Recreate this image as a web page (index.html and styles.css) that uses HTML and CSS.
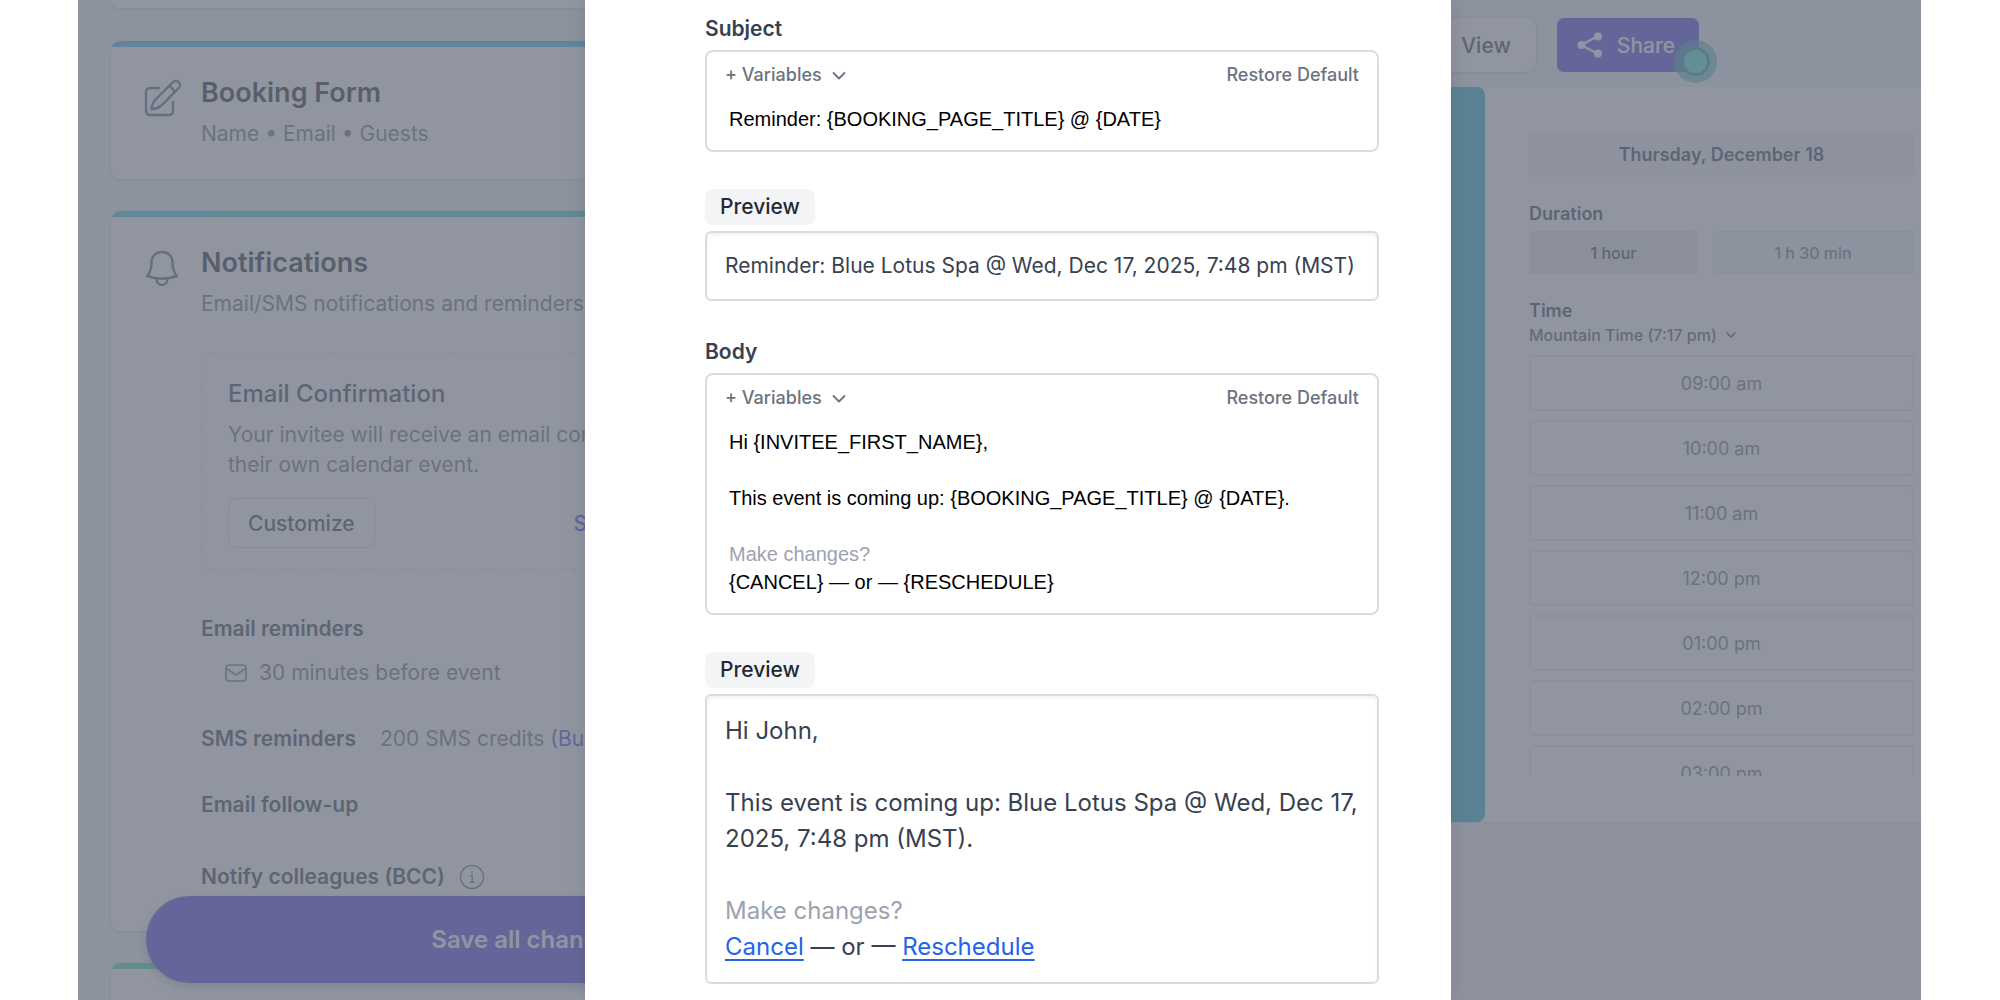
FILE: index.html
```html
<!DOCTYPE html>
<html lang="en">

<head>
    <meta charset="UTF-8">
    <meta name="viewport" content="width=device-width, initial-scale=1.0">
    <title>Booking Page - Notifications</title>
    <link rel="stylesheet" href="styles.css">
</head>

<body>
    <div class="app">
        <!-- settings -->
        <main class="settings">
            <section class="card card-prev"></section>

            <section class="card card-blue">
                <svg class="card-icon" viewBox="0 0 40 40" fill="none" stroke="currentColor" stroke-width="2.4" stroke-linecap="round" stroke-linejoin="round">
                    <path d="M17 11H8a4 4 0 0 0-4 4v19a4 4 0 0 0 4 4h19a4 4 0 0 0 4-4V25" />
                    <path d="M31 5.200a3.900 3.900 0 0 1 5.800 5.600L20 28c-3 2.600-6.500 4-10.500 4.300C9.800 28.200 11.200 25 14 22zM27.500 9l5.600 5.600" />
                </svg>
                <div class="card-body">
                    <h2>Booking Form</h2>
                    <p class="sub">Name • Email • Guests</p>
                </div>
            </section>

            <section class="card card-teal">
                <svg class="card-icon" viewBox="0 0 40 40" fill="none" stroke="currentColor" stroke-width="2.400" stroke-linecap="round" stroke-linejoin="round">
                    <path d="M20 5c-6.500 0-10.500 4.600-10.500 10.500 0 6-1 9.500-4.300 13.500C14.500 32.400 25.500 32.400 34.800 29c-3.300-4-4.300-7.500-4.300-13.500C30.500 9.600 26.500 5 20 5z" />
                    <path d="M14.500 31.500c0 4 2.500 6.500 5.500 6.500s5.500-2.500 5.500-6.500" />
                </svg>
                <div class="card-body">
                    <h2>Notifications</h2>
                    <p class="sub">Email/SMS notifications and reminders</p>

                    <div class="confirm-box">
                        <h3>Email Confirmation</h3>
                        <p class="sub">Your invitee will receive an email confirmation for<br>their own calendar event.</p>
                        <div class="confirm-actions">
                            <button type="button" class="btn-outline">Customize</button>
                            <a href="#" class="link">Send Test</a>
                        </div>
                    </div>

                    <h4>Email reminders</h4>
                    <p class="sub reminder">
                        <svg width="22" height="18" viewBox="0 0 22 18" fill="none" stroke="currentColor" stroke-width="1.600" stroke-linejoin="round">
                            <rect x="1" y="1" width="20" height="16" rx="2.500" />
                            <path d="M1.500 4.500L11 11l9.500-6.500" />
                        </svg>
                        30 minutes before event
                    </p>
                    <div class="row">
                        <h4>SMS reminders</h4>
                        <p class="sub">200 SMS credits <a href="#" class="link">(Buy more)</a></p>
                    </div>
                    <h4 class="row">Email follow-up</h4>
                    <div class="row row-bcc">
                        <h4>Notify colleagues (BCC)</h4>
                        <svg class="info" width="26" height="26" viewBox="0 0 26 26" fill="none" stroke="currentColor" stroke-width="1.500">
                            <circle cx="13" cy="13" r="11.500" />
                            <path d="M11 11.500h2.200V18M10.800 18.200h4.600M13 7.200v2" />
                        </svg>
                    </div>
                </div>
            </section>

            <section class="card card-green"></section>

            <button type="button" class="save">Save all changes</button>
        </main>

        <!-- booking page preview -->
        <aside class="side">
            <header class="topbar">
                <button type="button" class="btn-view">View</button>
                <button type="button" class="btn-share">
                    <svg width="26" height="26" viewBox="0 0 26 26" fill="currentColor">
                        <path d="M4 13L21 4M4 13l17 9" stroke="currentColor" stroke-width="2.400" />
                        <circle cx="4.500" cy="13" r="4" />
                        <circle cx="21" cy="4.500" r="4" />
                        <circle cx="21" cy="21.500" r="4" />
                    </svg>
                    Share
                    <span class="beacon"></span>
                </button>
            </header>
            <div class="booking">
                <div class="banner"></div>
                <div class="picker">
                    <div class="date">Thursday, December 18</div>
                    <h5>Duration</h5>
                    <div class="durations">
                        <button type="button" class="dur active">1 hour</button>
                        <button type="button" class="dur dur-long">1 h 30 min</button>
                    </div>
                    <h5><label for="tz">Time</label></h5>
                    <div class="tz">
                        <select id="tz">
                            <option>Mountain Time (7:17 pm)</option>
                        </select>
                        <svg width="12" height="12" viewBox="0 0 12 12" fill="none" stroke="currentColor" stroke-width="1.700" stroke-linecap="round" stroke-linejoin="round">
                            <path d="M2 4l4 4 4-4" />
                        </svg>
                    </div>
                    <div class="slots">
                        <button type="button">09:00 am</button>
                        <button type="button">10:00 am</button>
                        <button type="button">11:00 am</button>
                        <button type="button">12:00 pm</button>
                        <button type="button">01:00 pm</button>
                        <button type="button">02:00 pm</button>
                        <button type="button">03:00 pm</button>
                    </div>
                </div>
            </div>
        </aside>

        <div class="overlay"></div>

        <!-- customize email modal -->
        <div class="modal" role="dialog" aria-label="Customize email">
            <label class="label" for="subject">Subject</label>
            <div class="editor">
                <div class="toolbar">
                    <button type="button" aria-haspopup="menu">+ Variables
                        <svg width="14" height="14" viewBox="0 0 14 14" fill="none" stroke="currentColor" stroke-width="1.800" stroke-linecap="round" stroke-linejoin="round">
                            <path d="M1.500 5L7 10.500 12.500 5" />
                        </svg>
                    </button>
                    <button type="button">Restore Default</button>
                </div>
                <input type="text" id="subject" class="text" value="Reminder: {BOOKING_PAGE_TITLE} @ {DATE}">
            </div>

            <span class="pill">Preview</span>
            <div class="preview preview-subject">Reminder: Blue Lotus Spa @ Wed, Dec 17, 2025, 7:48 pm (MST)</div>

            <div class="label" id="body-label">Body</div>
            <div class="editor">
                <div class="toolbar">
                    <button type="button" aria-haspopup="menu">+ Variables
                        <svg width="14" height="14" viewBox="0 0 14 14" fill="none" stroke="currentColor" stroke-width="1.800" stroke-linecap="round" stroke-linejoin="round">
                            <path d="M1.500 5L7 10.500 12.500 5" />
                        </svg>
                    </button>
                    <button type="button">Restore Default</button>
                </div>
                <div class="text" contenteditable="true" role="textbox" aria-multiline="true" aria-labelledby="body-label" spellcheck="false">
                    Hi {INVITEE_FIRST_NAME},<br><br>
                    This event is coming up: {BOOKING_PAGE_TITLE} @ {DATE}.<br><br>
                    <span class="muted">Make changes?</span><br>
                    {CANCEL} — or — {RESCHEDULE}
                </div>
            </div>

            <span class="pill">Preview</span>
            <div class="preview">
                Hi John,<br><br>
                This event is coming up: Blue Lotus Spa @ Wed, Dec 17, 2025, 7:48 pm (MST).<br><br>
                <span class="muted">Make changes?</span><br>
                <a href="#">Cancel</a> — or — <a href="#">Reschedule</a>
            </div>
        </div>
    </div>
</body>

</html>
```
FILE: styles.css
```css
* {
    box-sizing: border-box;
}

body {
    margin: 0;
    background: #fff;
    font-family: Inter, "Liberation Sans", sans-serif;
    color: #374151;
}

h2, h3, h4, h5, p {
    margin: 0;
}

button, select, input {
    font-family: inherit;
    color: inherit;
    margin: 0;
    padding: 0;
    border: 0;
    background: none;
}

svg {
    display: block;
    flex: none;
}

.app {
    position: relative;
    display: grid;
    grid-template-columns: 1fr 1fr;
    height: 100vh;
    margin: 0 79px 0 78px;
    overflow: hidden;
    background: #f0f4f8;
}

/* settings */
.settings {
    position: relative;
    padding: 0 46px 0 33px;
}

.card {
    display: flex;
    gap: 19px;
    margin-bottom: 32px;
    padding: 36px 31px 30px;
    border-radius: 10px;
    background: #fff;
    box-shadow: 0 1px 4px rgba(0, 0, 0, 0.16);
}

.card-prev {
    height: 8px;
    padding: 0;
    border-radius: 0 0 10px 10px;
    margin-bottom: 33px;
}

.card-blue {
    background: linear-gradient(90deg, #46bdf0, #46bdf0) top / 100% 6px no-repeat #fff;
}

.card-teal {
    padding-bottom: 39px;
    background: linear-gradient(90deg, #3fcbe4, #48d8c0) top / 100% 6px no-repeat #fff;
}

.card-green {
    height: 80px;
    background: linear-gradient(90deg, #4fdcc0, #4fdcc0) top / 100% 6px no-repeat #fff;
}

.card-icon {
    width: 40px;
    height: 40px;
    color: #5f6080;
}

.card-body {
    flex: 1;
}

h2 {
    font-size: 27px;
    line-height: 32px;
    font-weight: 600;
    color: #1f2937;
}

.sub {
    font-size: 21px;
    line-height: 30px;
    color: #6b7280;
}

h2 + .sub {
    margin-top: 10px;
}

.confirm-box {
    margin: 34px 0 44px;
    padding: 24px 25px 20px;
    border: 2px dashed #edeff2;
    border-radius: 8px;
}

h3 {
    margin-bottom: 11px;
    font-size: 24px;
    line-height: 30px;
    font-weight: 500;
}

.confirm-actions {
    display: flex;
    align-items: center;
    justify-content: space-between;
    margin-top: 18px;
}

.btn-outline {
    height: 50px;
    padding: 0 19px;
    border: 1px solid #d1d5db;
    border-radius: 8px;
    font-size: 21px;
    font-weight: 500;
}

.link {
    color: #4f46e5;
    text-decoration: none;
}

.confirm-actions .link {
    width: 322px;
    font-size: 21px;
    font-weight: 500;
}

h4 {
    font-size: 21px;
    line-height: 30px;
    font-weight: 600;
}

.reminder {
    display: flex;
    align-items: center;
    gap: 12px;
    margin-top: 14px;
    padding-left: 24px;
}

.row {
    display: flex;
    align-items: center;
    gap: 24px;
    margin-top: 36px;
}

.row-bcc {
    gap: 14px;
    margin-top: 42px;
}

.info {
    color: #6b7280;
}

.save {
    position: absolute;
    left: 68px;
    right: 88px;
    top: 896px;
    height: 87px;
    border-radius: 44px;
    background: #4f46e5;
    color: #fff;
    font-size: 24px;
    font-weight: 600;
    box-shadow: 0 4px 10px rgba(0, 0, 0, 0.25);
}

/* booking page preview */
.side {
    background: #f3f4f6;
}

.topbar {
    display: flex;
    align-items: center;
    justify-content: flex-end;
    gap: 20px;
    height: 87px;
    padding: 17px 222px 14px 0;
    background: #f0f4f8;
}

.btn-view {
    height: 56px;
    padding: 0 25px;
    border: 1px solid #d1d5db;
    border-radius: 10px;
    background: #fff;
    font-size: 21px;
    font-weight: 500;
    box-shadow: 0 1px 3px rgba(0, 0, 0, 0.1);
}

.btn-share {
    position: relative;
    display: flex;
    align-items: center;
    gap: 14px;
    height: 54px;
    padding: 0 24px 0 20px;
    border-radius: 7px;
    background: #4f46e5;
    color: #fff;
    font-size: 21px;
    font-weight: 500;
}

.beacon {
    position: absolute;
    right: -18px;
    bottom: -11px;
    width: 43px;
    height: 43px;
    border: 7px solid rgba(45, 170, 175, 0.6);
    border-radius: 50%;
    background: #4fe0d6;
    background-clip: padding-box;
    box-shadow: inset 0 0 0 3px #2a9ba0;
}

.booking {
    display: flex;
    background: #fff;
    border-bottom: 1px solid #d9dce2;
}

.banner {
    flex: 1;
    border-radius: 8px;
    background: #2cb4ce;
}

.picker {
    width: 436px;
    padding: 45px 7px 46px 44px;
}

.date {
    margin-bottom: 25px;
    border-radius: 5px;
    background: #f3f4f6;
    font-size: 18px;
    line-height: 45px;
    font-weight: 600;
    text-align: center;
}

h5 {
    font-size: 18px;
    line-height: 24px;
    font-weight: 600;
}

.durations {
    display: flex;
    gap: 14px;
    margin: 5px 0 25px;
}

.dur {
    flex: 11;
    height: 43px;
    border-radius: 4px;
    font-size: 16px;
    font-weight: 500;
}

.dur.active {
    background: #e5e7eb;
}

.dur-long {
    flex: 13;
    border: 1px solid #e5e7eb;
    background: #f0f4f8;
    color: #6b7280;
}

.tz {
    display: flex;
    align-items: center;
    gap: 8px;
    margin: 2px 0 10px;
    color: #4b5563;
}

.tz select {
    appearance: none;
    height: 20px;
    font-size: 16px;
    font-weight: 500;
}

.slots {
    display: flex;
    flex-direction: column;
    gap: 9px;
    height: 421px;
    overflow: hidden;
}

.slots button {
    flex: none;
    height: 56px;
    border: 2px solid #e9ebee;
    border-radius: 4px;
    font-size: 18px;
    color: #6b7280;
}

.overlay {
    position: absolute;
    inset: 0;
    background: rgba(107, 114, 128, 0.75);
}

/* modal */
.modal {
    position: absolute;
    top: 0;
    bottom: 0;
    left: 507px;
    right: 470px;
    padding: 15px 72px 0 120px;
    overflow: hidden;
    background: #fff;
    box-shadow: 0 0 20px rgba(0, 0, 0, 0.1);
}

.label {
    display: block;
    margin-bottom: 7px;
    font-size: 21px;
    line-height: 28px;
    font-weight: 600;
}

.editor {
    margin-bottom: 37px;
    padding: 11px 18px 17px;
    border: 2px solid #d9dde3;
    border-radius: 8px;
}

.toolbar {
    display: flex;
    justify-content: space-between;
    margin-bottom: 18px;
    color: #6b7280;
}

.toolbar button {
    display: flex;
    align-items: center;
    gap: 10px;
    font-size: 18px;
    line-height: 24px;
    font-weight: 500;
}

.text {
    display: block;
    width: 100%;
    padding: 0 4px;
    font-family: "Liberation Sans", Arial, sans-serif;
    font-size: 20px;
    line-height: 28px;
    color: #000;
}

input.text {
    height: 28px;
}

.pill {
    display: block;
    width: fit-content;
    margin-bottom: 6px;
    padding: 0 15px;
    border-radius: 8px;
    background: #f3f4f6;
    color: #1f2937;
    font-size: 21px;
    line-height: 36px;
    font-weight: 500;
}

.preview {
    padding: 17px 16px 17px 18px;
    border: 2px solid #d9dde3;
    border-radius: 6px;
    box-shadow: inset 0 2px 4px rgba(0, 0, 0, 0.06);
    font-size: 24px;
    line-height: 36px;
}

.preview-subject {
    margin-bottom: 37px;
    font-size: 21px;
    line-height: 32px;
}

.preview a {
    color: #2563eb;
    text-decoration-thickness: 2px;
    text-underline-offset: 4px;
}

.muted {
    color: #9ca3af;
}
```
